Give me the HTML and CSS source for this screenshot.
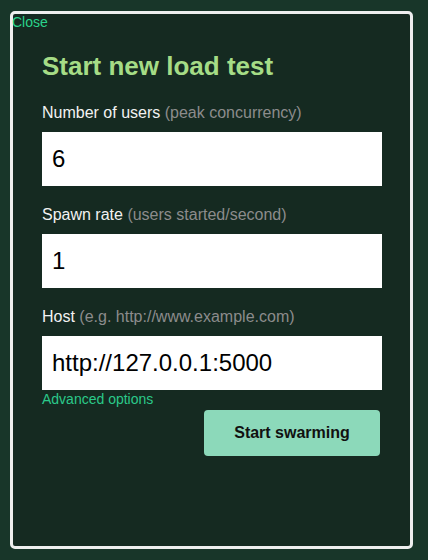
FILE: index.html
```html
<!DOCTYPE html>
<html lang="en">
<head>
<meta charset="utf-8">
<title>Start new load test</title>
<link rel="stylesheet" href="styles.css">
</head>
<body>
<div class="dialog">
  <a class="close" href="#">Close</a>
  <form class="form">
    <h2 class="title">Start new load test</h2>
    <label class="label" for="users">Number of users <span class="hint">(peak concurrency)</span></label>
    <input class="field" id="users" type="text" value="6">
    <label class="label" for="rate">Spawn rate <span class="hint">(users started/second)</span></label>
    <input class="field" id="rate" type="text" value="1">
    <label class="label" for="host">Host <span class="hint">(e.g. http://www.example.com)</span></label>
    <input class="field" id="host" type="text" value="http://127.0.0.1:5000">
    <a class="advanced" href="#">Advanced options</a>
    <div class="actions">
      <button class="submit" type="button">Start swarming</button>
    </div>
  </form>
</div>
</body>
</html>
```
FILE: styles.css
```css
html, body {
  margin: 0;
  padding: 0;
}
body {
  background: #183629;
  font-family: "Liberation Sans", Arial, sans-serif;
  width: 428px;
  height: 560px;
  overflow: hidden;
}
.dialog {
  box-sizing: border-box;
  width: 403px;
  height: 538px;
  margin: 11px 0 0 10px;
  border: 3px solid #eeeeee;
  border-radius: 5px;
  background: #152a21;
  display: flex;
  flex-direction: column;
}
.close {
  align-self: flex-start;
  font-size: 14px;
  line-height: 16px;
  color: #2ad38b;
  text-decoration: none;
  margin-left: -1px;
}
.form {
  display: flex;
  flex-direction: column;
  padding: 0 28px 0 29px;
}
.title {
  margin: 21px 0 0;
  font-size: 26px;
  line-height: 30px;
  font-weight: bold;
  color: #a5dc86;
}
.label {
  font-size: 16px;
  line-height: 20px;
  color: #f2f2f2;
  margin-top: 19px;
}
.title + .label {
  margin-top: 22px;
}
.hint {
  color: #8c8c8c;
}
.field {
  box-sizing: border-box;
  width: 340px;
  height: 54px;
  margin-top: 9px;
  border: none;
  border-radius: 0;
  padding: 0 10px;
  font-family: "Liberation Sans", Arial, sans-serif;
  font-size: 24px;
  color: #000;
  background: #fff;
  outline: none;
}
.advanced {
  align-self: flex-start;
  font-size: 14px;
  line-height: 16px;
  margin-top: 1px;
  color: #2bc98a;
  text-decoration: none;
}
.actions {
  display: flex;
  justify-content: flex-end;
  width: 340px;
  margin-top: 3px;
}
.submit {
  width: 176px;
  height: 46px;
  margin-right: 2px;
  border: none;
  border-radius: 4px;
  background: #8cd9ba;
  font-family: "Liberation Sans", Arial, sans-serif;
  font-size: 16px;
  font-weight: bold;
  color: #111;
}
```
